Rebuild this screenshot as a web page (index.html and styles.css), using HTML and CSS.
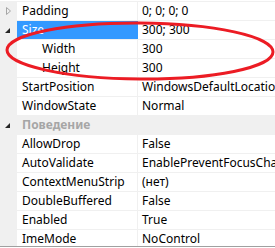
FILE: index.html
```html
<!DOCTYPE html>
<html lang="ru">
<head>
    <meta charset="UTF-8">
    <title>Свойства</title>
    <link rel="stylesheet" href="styles.css">
</head>
<body>

    <div class="grid">
        <div class="row">
            <div class="gutter">
                <svg class="glyph" width="16" height="18" viewBox="0 0 16 18"><path d="M6.5 5.5 L10.5 9 L6.5 12.5 Z" fill="none" stroke="#a6a6a6"/></svg>
            </div>
            <div class="name">Padding</div>
            <div class="value">0; 0; 0; 0</div>
        </div>
        <div class="row selected">
            <div class="gutter">
                <svg class="glyph" width="16" height="18" viewBox="0 0 16 18"><path d="M10 7 L10 12 L5 12 Z" fill="#262626"/></svg>
            </div>
            <div class="name">Size</div>
            <div class="value">300; 300</div>
        </div>
        <div class="row">
            <div class="gutter"></div>
            <div class="name sub">Width</div>
            <div class="value">300</div>
        </div>
        <div class="row">
            <div class="gutter"></div>
            <div class="name sub">Height</div>
            <div class="value">300</div>
        </div>
        <div class="row">
            <div class="gutter"></div>
            <div class="name">StartPosition</div>
            <div class="value">WindowsDefaultLocation</div>
        </div>
        <div class="row">
            <div class="gutter"></div>
            <div class="name">WindowState</div>
            <div class="value">Normal</div>
        </div>
        <div class="row category">
            <div class="gutter">
                <svg class="glyph" width="16" height="18" viewBox="0 0 16 18"><path d="M10 7 L10 12 L5 12 Z" fill="#262626"/></svg>
            </div>
            <div class="cat-title">Поведение</div>
        </div>
        <div class="row">
            <div class="gutter"></div>
            <div class="name">AllowDrop</div>
            <div class="value">False</div>
        </div>
        <div class="row">
            <div class="gutter"></div>
            <div class="name">AutoValidate</div>
            <div class="value">EnablePreventFocusChange</div>
        </div>
        <div class="row">
            <div class="gutter"></div>
            <div class="name">ContextMenuStrip</div>
            <div class="value">(нет)</div>
        </div>
        <div class="row">
            <div class="gutter"></div>
            <div class="name">DoubleBuffered</div>
            <div class="value">False</div>
        </div>
        <div class="row">
            <div class="gutter"></div>
            <div class="name">Enabled</div>
            <div class="value">True</div>
        </div>
        <div class="row">
            <div class="gutter"></div>
            <div class="name">ImeMode</div>
            <div class="value">NoControl</div>
        </div>
    </div>

    <!-- красный овал поверх Size -->
    <svg class="mark" width="275" height="248" viewBox="0 0 275 248">
        <ellipse cx="140" cy="51" rx="133" ry="28" transform="rotate(0.4 140 51)" fill="none" stroke="#ec1c24" stroke-width="3"/>
    </svg>

</body>
</html>
```

FILE: styles.css
```css
body {
    margin: 0;
    width: 275px;
    height: 248px;
    overflow: hidden;
    background-color: #ffffff;
    font-family: "Noto Sans", "Open Sans", sans-serif;
    font-size: 12px;
    color: #000000;
    position: relative;
}
.grid {
    margin-top: 1px;
    height: 244px;
    overflow: hidden;
    border-top: 1px solid #f0f0f0;
    border-bottom: 1px solid #a0a0a0;
}
.row {
    display: flex;
    height: 18px;
    border-bottom: 1px solid #f0f0f0;
    white-space: nowrap;
}
.gutter {
    width: 17px;
    flex: none;
    background-color: #f0f0f0;
    margin-bottom: -1px;
}
.glyph {
    display: block;
}
.name {
    width: 115px;
    flex: none;
    padding-left: 5px;
    line-height: 18px;
    border-right: 1px solid #f0f0f0;
}
.name.sub {
    padding-left: 25px;
    width: 95px;
}
.value {
    flex: 1;
    padding-left: 4px;
    line-height: 18px;
    overflow: hidden;
}
.selected .name {
    background-color: #3399ff;
    color: #ffffff;
    border-right-color: #3399ff;
}
.category {
    background-color: #f0f0f0;
}
.cat-title {
    padding-left: 5px;
    line-height: 18px;
    font-weight: bold;
    color: #a6a6a6;
}
.mark {
    position: absolute;
    left: 0;
    top: 0;
}
```
